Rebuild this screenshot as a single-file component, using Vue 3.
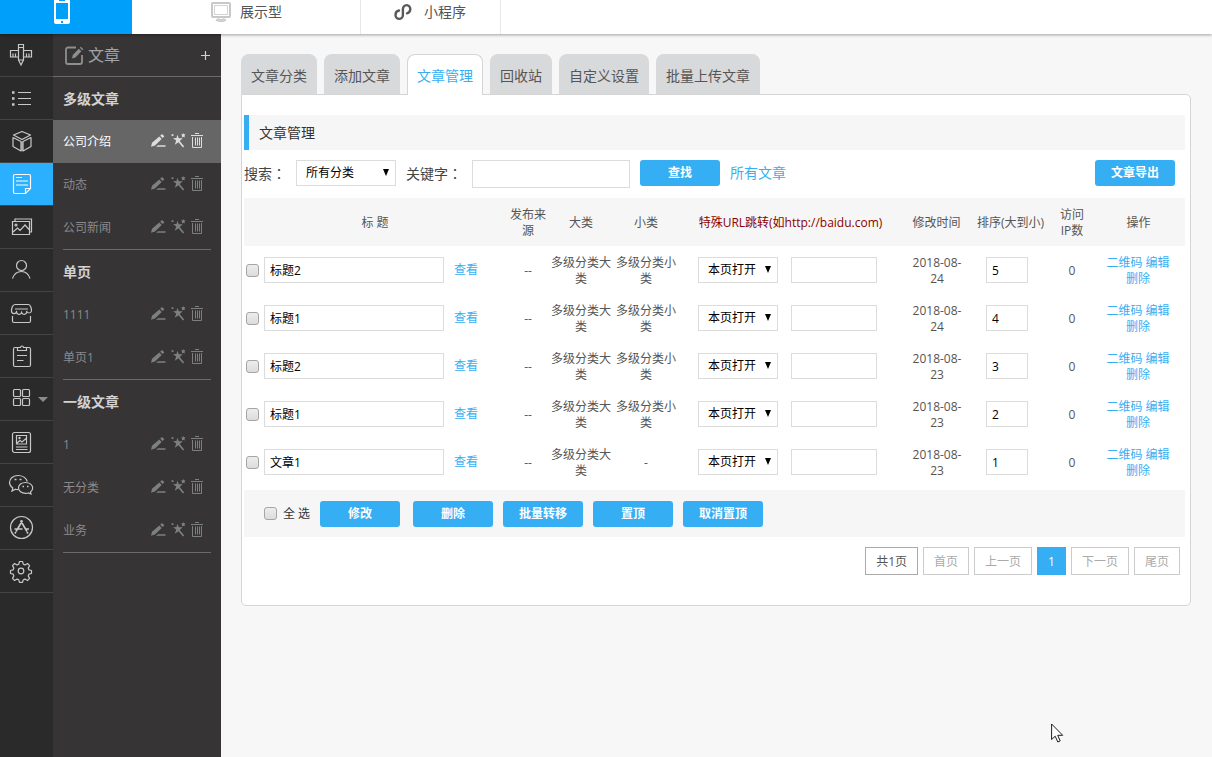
<script setup>
import { ref } from 'vue'

const railItems = ['设计', '列表', '产品', '文章', '图片', '会员', '商城', '表单', '应用', '名片', '微信', '小程序', '设置']

const groups = [
  { title: '多级文章', items: ['公司介绍', '动态', '公司新闻'] },
  { title: '单页', items: ['1111', '单页1'] },
  { title: '一级文章', items: ['1', '无分类', '业务'] }
]

const tabs = ['文章分类', '添加文章', '文章管理', '回收站', '自定义设置', '批量上传文章']

const rows = ref([
  { title: '标题2', big: '多级分类大类', small: '多级分类小类', date: '2018-08-24', order: '5' },
  { title: '标题1', big: '多级分类大类', small: '多级分类小类', date: '2018-08-24', order: '4' },
  { title: '标题2', big: '多级分类大类', small: '多级分类小类', date: '2018-08-23', order: '3' },
  { title: '标题1', big: '多级分类大类', small: '多级分类小类', date: '2018-08-23', order: '2' },
  { title: '文章1', big: '多级分类大类', small: '-', date: '2018-08-23', order: '1' }
])

const bulkActions = ['修改', '删除', '批量转移', '置顶', '取消置顶']
const pages = ['首页', '上一页', '1', '下一页', '尾页']
</script>

<template>
  <div class="app">
    <header class="topbar">
      <a href="#" class="top-mobile" aria-label="手机版">
        <svg width="16" height="26" viewBox="0 0 16 26">
          <path fill="#fff" d="M2 0h12a2 2 0 0 1 2 2v22a2 2 0 0 1-2 2H2a2 2 0 0 1-2-2V2a2 2 0 0 1 2-2z" />
          <path fill="#009ff9" d="M2 5h12v16H2zM5 2h6v1H5zM7 23h2v2H7z" />
        </svg>
      </a>
      <a href="#" class="top-link top-show">
        <svg width="20" height="20" viewBox="0 0 20 20" fill="none" stroke="#c8c8c8">
          <rect x="1" y="1" width="18" height="14" rx="1" stroke-width="2" />
          <rect x="3.500" y="3.500" width="13" height="9" stroke="#d4d4d4" />
          <path d="M8.500 15.500l-1 2M11.500 15.500l1 2" stroke="#d4d4d4" />
          <path d="M5 18.200c1-1.500 2.500-1.500 3.500-.7h3c1-.8 2.500-.8 3.500.7-2 1.800-8 1.800-10 0z" fill="#d4d4d4" />
        </svg>
        <span>展示型</span>
      </a>
      <a href="#" class="top-link top-mini">
        <svg width="18" height="18" viewBox="0 0 18 18" fill="none" stroke="#58595b" stroke-width="2.400" stroke-linecap="round">
          <path d="M5 7.500C2.500 8 1.500 9.800 1.500 12a3.700 3.900 0 0 0 7.400 0V6a3.700 3.900 0 1 1 7.400 0c0 2.200-1.200 3.800-3.300 4.300" />
        </svg>
        <span>小程序</span>
      </a>
    </header>

    <div class="body">
      <nav class="rail" aria-label="主菜单">
        <a v-for="(name, i) in railItems" :key="name" href="#" class="rail-item" :class="{ on: i === 3 }" :aria-label="name">
          <svg width="28" height="28" viewBox="0 0 28 28" fill="none" stroke="currentColor" stroke-width="1.2">
            <g v-if="i === 0">
              <path d="M11.500 3.500h5v15.500h-5zM11.500 6.500h5M11.500 19l2.500 5 2.500-5M11.500 9.500h-8v6.500h8M16.500 9.500h8v6.500h-8M6 15.500v-3M8.500 15.500v-3M19.500 15.500v-3M22 15.500v-3" />
            </g>
            <g v-else-if="i === 1">
              <path d="M11 8.500h13M11 14.500h13M11 20.500h13" />
              <path d="M5 7.200h2.500v2.500H5zM5 13.200h2.500v2.500H5zM5 19.200h2.500v2.500H5z" fill="currentColor" stroke="none" />
            </g>
            <g v-else-if="i === 2" stroke-linejoin="round">
              <path d="M15 4.500l8.500 3.500-8.500 4.500L6.500 8zM6 10.500l8 4v9.500l-8-4.500zM24 10.500l-8 4v9.500l8-4.500z" />
              <path d="M15 14.500v9.500" stroke-width="2" opacity=".6" />
            </g>
            <g v-else-if="i === 3">
              <path d="M8 4.500h14a1.500 1.500 0 0 1 1.500 1.500v12.500l-5 5H8A1.500 1.500 0 0 1 6.500 22V6A1.500 1.500 0 0 1 8 4.500zM18.500 23.500v-5h5M9 7.500h6M9 11h12M9 15h12" />
            </g>
            <g v-else-if="i === 4">
              <path d="M5.500 8.500h17v13h-17zM8 8.500v-2.500h16.500v13h-2M6 19l4.500-4 2.500 2.500 5-5.500 4.500 5" />
              <circle cx="9" cy="12" r="1" />
            </g>
            <g v-else-if="i === 5">
              <circle cx="14.500" cy="9.500" r="5" /><path d="M5.500 22.500c1.500-4.500 5-7 9-7s7 2.500 8.500 7" />
            </g>
            <g v-else-if="i === 6">
              <path d="M8 5.500h13.500c2 0 3 4 3 6.500a2.500 2.500 0 0 1-4.900 0 2.500 2.500 0 0 1-5 1.500 2.500 2.500 0 0 1-5-1.500A2.500 2.500 0 0 1 4.500 12c0-2.500 1-6.500 3.500-6.500zM8 10h13M5.500 17v5a1.500 1.500 0 0 0 1.500 1.500h15a1.500 1.500 0 0 0 1.500-1.500v-5" />
            </g>
            <g v-else-if="i === 7">
              <path d="M10 5.500H8A1.500 1.500 0 0 0 6.500 7v16A1.500 1.500 0 0 0 8 24.500h14a1.500 1.500 0 0 0 1.500-1.500V7A1.500 1.500 0 0 0 22 5.500h-2M10.500 8.500v-3h3a1.500 1.500 0 0 1 3 0h3v3zM10 13.500h10M10 18.500h6.500" />
            </g>
            <g v-else-if="i === 8">
              <rect x="6.500" y="4.500" width="7" height="7" rx="1" /><rect x="15.500" y="4.500" width="7" height="7" rx="1" />
              <rect x="6.500" y="13.500" width="7" height="7" rx="1" /><rect x="15.500" y="13.500" width="7" height="7" rx="1" />
            </g>
            <g v-else-if="i === 9">
              <rect x="5.500" y="4.500" width="18" height="20" rx="2" />
              <path d="M9.500 7.500h10v8.500h-10zM10 15l3-2.500 2 1.500 4-3.500M9 19h11.500M9 21.500h11.500" /><circle cx="12.500" cy="10" r=".6" />
            </g>
            <g v-else-if="i === 10">
              <path d="M11.500 18.500c-1 .1-2 0-3-.3L5 20l.8-3C3.500 15.500 2.500 13.500 2.500 11.500c0-4 3.800-7 8.500-7s8.300 2.700 9.300 6" />
              <path d="M18.500 11.500c4.100 0 7.200 2.500 7.200 5.400 0 1.800-.8 3-2.200 4.100l.5 2-2.500-1a9 9 0 0 1-3 .4c-4 0-7-2.500-7-5.500s3-5.400 7-5.400z" />
              <path d="M7.500 8.500h2M12.500 8.500h2M15.500 15.500h1.500M20 15.500h1.500" stroke-width="1.600" />
            </g>
            <g v-else-if="i === 11">
              <circle cx="14.500" cy="13.500" r="11" />
              <path d="M13.500 6.500l6.500 11M15.500 6.500l-6.500 11M7.500 15h8M18 15h4M8.800 18l-.8 1.500M20 18l1 1.500" stroke-width="1.600" />
            </g>
            <g v-else stroke-linejoin="round">
              <path d="M12.500 4.500h3l.8 2.700 1.700.7 2.500-1.400 2.100 2.100-1.400 2.500.7 1.700 2.600.7v3l-2.600.7-.7 1.700 1.400 2.500-2.100 2.100-2.500-1.400-1.700.7-.8 2.600h-3l-.7-2.600-1.700-.7-2.500 1.400-2.100-2.100 1.400-2.500-.7-1.700-2.700-.7v-3l2.700-.7.7-1.700-1.400-2.500 2.100-2.100 2.500 1.400 1.700-.7z" />
              <circle cx="14" cy="14" r="2.800" />
            </g>
          </svg>
          <i v-if="i === 8" class="caret"></i>
        </a>
      </nav>

      <aside class="side">
        <div class="side-head">
          <svg width="19" height="19" viewBox="0 0 19 19" fill="none" stroke="#8d9090" stroke-width="1.800">
            <path d="M11 1.500H3A2 2 0 0 0 1 3.500V16a2 2 0 0 0 2 2h12a2 2 0 0 0 2-2V9" />
            <path d="M7 12.500l.8-3.500 6-6.200 2.600 2.500-6 6.200zM14.800 1.800l1-1 2.600 2.500-1 1z" fill="#8d9090" stroke="none" />
          </svg>
          <span>文章</span>
          <button type="button" class="add" aria-label="添加">
            <svg width="9" height="9" viewBox="0 0 9 9" stroke="#b5d9ee" stroke-width="1.200"><path d="M4.500 0v9M0 4.500h9" /></svg>
          </button>
        </div>
        <section v-for="(g, gi) in groups" :key="g.title" class="group">
          <h2>{{ g.title }}</h2>
          <div v-for="(item, ii) in g.items" :key="item" class="side-item" :class="{ current: gi === 0 && ii === 0 }">
            <a href="#">{{ item }}</a>
            <button type="button" aria-label="编辑">
              <svg width="15" height="15" viewBox="0 0 15 15" fill="currentColor"><path d="M0 13.800l1-4L8.300 3.500l2.400 2.400L4 12.600zM9.200 2.700L11 1l2.400 2.300L11.600 5zM5 13.800l2-1.600H14.500v1.600z" /></svg>
            </button>
            <button type="button" aria-label="推广">
              <svg width="15" height="15" viewBox="0 0 15 15" fill="currentColor"><path d="M6.400 1.800l1.400 3.400 3.900.1-3 2.600 4.500 5.700-1.200 1-4.500-5.300-3.700 2.400 1.400-4.100L2 5.300l3.500-.2zM0 2l1.500-.9L3 2 1.500 3.200zM12.300 0l.6 1.300 1.700.2-1.100 1.200.3 1.700-1.500-.7-1.500.7.300-1.700L10 1.500l1.700-.2z" /></svg>
            </button>
            <button type="button" aria-label="删除">
              <svg width="13" height="15" viewBox="0 0 13 15" fill="none" stroke="currentColor"><path d="M0 2.500h12M4 .5h4M1.500 4v10.500h9V4M4.500 4.500v8M6.500 4.500v8M8.500 4.500v8" /></svg>
            </button>
          </div>
        </section>
      </aside>

      <main class="main">
        <nav class="tabs" aria-label="文章">
          <a v-for="(t, i) in tabs" :key="t" href="#" class="tab" :class="{ active: i === 2 }">{{ t }}</a>
        </nav>
        <div class="panel">
          <h1 class="title">文章管理</h1>
          <form class="search" @submit.prevent>
            <label for="cat">搜索<span class="colon">：</span></label>
            <span class="select cat">
              <select id="cat"><option>所有分类</option></select>
            </span>
            <label for="kw">关键字<span class="colon">：</span></label>
            <input id="kw" type="text" class="kw">
            <button type="submit" class="btn">查找</button>
            <a href="#">所有文章</a>
            <button type="button" class="btn export">文章导出</button>
          </form>

          <table>
            <colgroup>
              <col class="c-title"><col class="c-src"><col class="c-cls"><col class="c-cls"><col class="c-url"><col class="c-date"><col class="c-order"><col class="c-ip"><col class="c-ops">
            </colgroup>
            <thead>
              <tr>
                <th>标 题</th>
                <th>发布来源</th>
                <th>大类</th>
                <th>小类</th>
                <th class="red">特殊URL跳转(如http://baidu.com)</th>
                <th>修改时间</th>
                <th class="tight">排序(大到小)</th>
                <th class="ip">访问IP数</th>
                <th>操作</th>
              </tr>
            </thead>
            <tbody>
              <tr v-for="(r, i) in rows" :key="i">
                <td class="field">
                  <div class="cell-title">
                    <input type="checkbox" :aria-label="'选择' + r.title">
                    <input v-model="r.title" type="text" class="title-input" aria-label="标题">
                    <a href="#">查看</a>
                  </div>
                </td>
                <td>--</td>
                <td>{{ r.big }}</td>
                <td>{{ r.small }}</td>
                <td class="field">
                  <div class="cell-url">
                    <span class="select">
                      <select aria-label="打开方式"><option>本页打开</option></select>
                    </span>
                    <input type="text" class="url-input" aria-label="跳转地址">
                  </div>
                </td>
                <td class="date">{{ r.date }}</td>
                <td class="field order"><input v-model="r.order" type="text" class="order-input" aria-label="排序"></td>
                <td>0</td>
                <td class="ops"><a href="#">二维码</a> <a href="#">编辑</a> <a href="#">删除</a></td>
              </tr>
            </tbody>
          </table>

          <div class="bulk">
            <label><input type="checkbox"><span>全 选</span></label>
            <button v-for="b in bulkActions" :key="b" type="button" class="btn">{{ b }}</button>
          </div>

          <nav class="pager" aria-label="分页">
            <span class="page total">共1页</span>
            <a v-for="p in pages" :key="p" href="#" class="page" :class="{ now: p === '1' }">{{ p }}</a>
          </nav>
        </div>
      </main>
    </div>

    <svg class="pointer" width="13" height="20" viewBox="0 0 13 20">
      <path d="M.6 1v15.500l3.600-3.300 2.600 5.800 2.400-1.100-2.500-5.600h5z" fill="#fff" stroke="#1c1c28" />
    </svg>
  </div>
</template>

<style>
body { background: #f7f7f7; }
</style>

<style scoped>
* { box-sizing: border-box; }
.app {
  position: relative;
  display: flex;
  flex-direction: column;
  min-height: 100vh;
  font-family: "Open Sans", "Noto Sans CJK SC", sans-serif;
  font-size: 12px;
  line-height: 16px;
  color: #555;
}
a { color: #38aef2; text-decoration: none; }
button, input, select { font: inherit; margin: 0; }
button { border: 0; padding: 0; background: none; cursor: pointer; }
svg { display: block; flex: none; }

.topbar {
  position: relative;
  z-index: 1;
  display: flex;
  height: 34px;
  background: #fff;
  box-shadow: 0 1px 3px rgba(0, 0, 0, .35);
}
.topbar a { display: flex; border-right: 1px solid #e8e8e8; }
.topbar .top-mobile { width: 132px; padding-left: 54px; background: #009ff9; border: 0; }
.topbar .top-mobile svg { margin-top: -2px; }
.top-link { height: 34px; padding-bottom: 10px; align-items: center; font-size: 14px; color: #555; }
.topbar .top-show { width: 229px; padding-left: 79px; gap: 9px; }
.topbar .top-mini { width: 140px; padding-left: 33px; gap: 12px; }

.body { display: flex; flex: 1; }
.rail { width: 53px; flex: none; background: #2a2a2a; }
.rail-item {
  display: flex;
  align-items: center;
  height: 43px;
  padding-left: 7px;
  border-bottom: 1px solid #444;
  color: #c8c8c8;
}
.rail-item.on { background: #2ab0ff; color: #fff; }
.caret { margin-left: 3px; border: 5px solid transparent; border-top-color: #8b8b8b; border-bottom: 0; }

.side { width: 168px; flex: none; background: #373435; color: #8a8a8c; }
.side-head {
  display: flex;
  align-items: center;
  height: 43px;
  padding: 0 11px 0 12px;
  gap: 4px;
  border-bottom: 1px solid #6b6b6b;
  font-size: 16px;
  color: #a0a2a4;
}
.add { margin-left: auto; }
.group h2 { margin: 0; padding-left: 10px; font-size: 14px; line-height: 43px; color: #d2d2d2; }
.group::after { content: ""; display: block; height: 1px; margin: 0 10px; background: #6b6b6b; }
.side-item { display: flex; align-items: center; gap: 5px; height: 43px; padding: 0 17px 0 10px; }
.side-item a { flex: 1; color: inherit; }
.side-item button { padding-bottom: 2px; color: #7d8080; }
.side-item.current { background: #666; color: #fff; }
.side-item.current button { color: #ddd; }

.main { flex: 1; min-width: 0; padding: 20px 21px 20px 20px; }
.tabs { display: flex; gap: 7px; }
.tab {
  height: 40px;
  padding: 0 10px;
  border-radius: 8px 8px 0 0;
  background: #d8d9db;
  font-size: 14px;
  line-height: 44px;
  color: #555;
}
.tab.active {
  position: relative;
  height: 41px;
  margin-bottom: -1px;
  padding: 0 9px;
  border: 1px solid #d5d5d5;
  border-bottom: 0;
  background: #fff;
  line-height: 42px;
  color: #38aef2;
}
.panel {
  padding: 20px 5px 30px 2px;
  border: 1px solid #d5d5d5;
  border-radius: 0 5px 5px 5px;
  background: #fff;
}
.title {
  margin: 0 0 10px;
  padding-left: 10px;
  border-left: 5px solid #36aef3;
  background: #f6f6f6;
  font-size: 14px;
  font-weight: 400;
  line-height: 35px;
  color: #333;
}
.search { display: flex; gap: 10px; margin-bottom: 10px; padding-right: 10px; font-size: 14px; line-height: 26px; color: #444; }
.colon { font-family: "Noto Sans CJK TC", sans-serif; }
input[type="text"], select {
  height: 26px;
  border: 1px solid #dcdcdc;
  border-radius: 0;
  background: #fff;
  font-size: 12px;
  line-height: 16px;
  color: #000;
}
input[type="text"] { padding: 0 5px; }
.kw[type="text"] { width: 158px; height: 28px; }
.select { position: relative; display: block; width: 80px; height: 26px; flex: none; }
.select select { display: block; width: 100%; padding: 0 9px; appearance: none; }
.select::after {
  content: "";
  position: absolute;
  top: 9px;
  right: 7px;
  border: 3px solid transparent;
  border-top: 7px solid #000;
  border-bottom: 0;
  pointer-events: none;
}
.select.cat { width: 100px; }
.btn {
  width: 80px;
  height: 26px;
  flex: none;
  border-radius: 3px;
  background: #36aef3;
  font-size: 12px;
  font-weight: 700;
  line-height: 26px;
  color: #fff;
}
.export { margin-left: auto; }
input[type="checkbox"] {
  width: 13px;
  height: 13px;
  flex: none;
  appearance: none;
  border: 1px solid #a6a6a6;
  border-radius: 3px;
  background: linear-gradient(#ededed, #dcdcdc);
}

table { width: 100%; margin-bottom: 4px; border-collapse: collapse; table-layout: fixed; }
.c-src { width: 41px; }
.c-cls { width: 65px; }
.c-url { width: 224px; }
.c-date { width: 68px; }
.c-order { width: 80px; }
.c-ip { width: 43px; }
.c-ops { width: 90px; }
th, td { height: 48px; padding: 2px 3px 0 0; text-align: center; vertical-align: middle; font-weight: 400; }
td.field { padding: 0; }
thead { background: #f6f6f6; }
th.red { color: #8b0000; white-space: nowrap; }
th.tight { white-space: nowrap; }
th.ip { padding: 2px 9px 0 6px; }
td.date { padding: 2px 8px 0 6px; }
td.ops { padding: 2px 10px 0 6px; }
td.order { padding-left: 14px; text-align: left; }
.cell-title { display: flex; align-items: center; gap: 5px; padding-left: 2px; }
.title-input { width: 180px; margin-right: 5px; }
.cell-url { display: flex; gap: 13px; padding-left: 18px; }
.url-input { width: 86px; }
.order-input { width: 42px; }

.bulk { display: flex; align-items: center; gap: 10px; height: 47px; padding-left: 20px; background: #f6f6f6; }
.bulk label { display: flex; align-items: center; gap: 6px; color: #333; }
.bulk label + .btn { margin-right: 3px; }

.pager { display: flex; justify-content: flex-end; gap: 5px; margin-top: 10px; padding-right: 5px; }
.page { height: 28px; padding: 0 10px; border: 1px solid #ccc; line-height: 28px; color: #aaa; }
.page.total { border-color: #aaa; color: #555; }
.page.now { border-color: #36aef3; background: #36aef3; color: #fff; }

.pointer { position: absolute; left: 1051px; top: 723px; }
</style>
